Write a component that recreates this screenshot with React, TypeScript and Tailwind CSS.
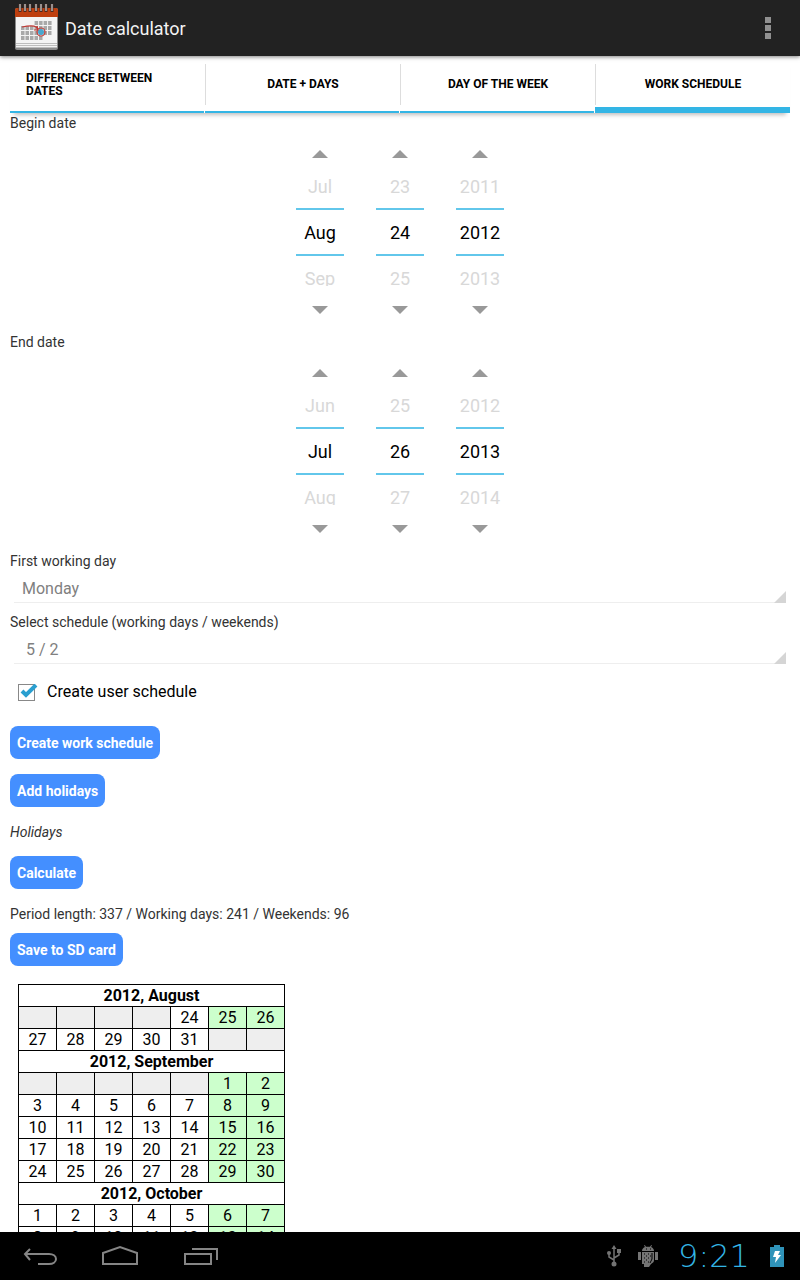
import { useId, useState } from "react";
import type { ReactNode } from "react";
import clsx from "clsx";

const MONTHS = [
  "January",
  "February",
  "March",
  "April",
  "May",
  "June",
  "July",
  "August",
  "September",
  "October",
  "November",
  "December",
];

const WEEKDAYS = [
  "Monday",
  "Tuesday",
  "Wednesday",
  "Thursday",
  "Friday",
  "Saturday",
  "Sunday",
];

const TABS = [
  "Difference between dates",
  "Date + days",
  "Day of the week",
  "Work schedule",
];

const DAY_MS = 24 * 60 * 60 * 1000;

interface DateParts {
  year: number;
  month: number;
  day: number;
}

interface CalendarDay {
  day: number;
  weekend: boolean;
}

interface CalendarMonth {
  title: string;
  weeks: (CalendarDay | null)[][];
}

function toTime({ year, month, day }: DateParts) {
  return Date.UTC(year, month, day);
}

function wrap(value: number, count: number) {
  return (value + count) % count;
}

function buildSchedule(begin: DateParts, end: DateParts) {
  const months: CalendarMonth[] = [];
  let total = 0;
  let weekends = 0;

  for (let time = toTime(begin); time <= toTime(end); time += DAY_MS) {
    const date = new Date(time);
    const column = (date.getUTCDay() + 6) % 7;
    const weekend = column > 4;
    const title = `${date.getUTCFullYear()}, ${MONTHS[date.getUTCMonth()]}`;

    let month = months[months.length - 1];
    if (!month || month.title !== title) {
      month = { title, weeks: [] };
      months.push(month);
    }
    if (month.weeks.length === 0 || column === 0) {
      month.weeks.push(Array(7).fill(null));
    }
    month.weeks[month.weeks.length - 1][column] = {
      day: date.getUTCDate(),
      weekend,
    };

    total += 1;
    if (weekend) weekends += 1;
  }

  return { months, total, weekends };
}

function AppIcon() {
  return (
    <svg width="46" height="48" viewBox="0 0 46 48" aria-hidden="true">
      <rect x="1" y="4" width="43" height="42" rx="2" fill="#8b8b8b" />
      <rect x="2" y="13" width="41" height="31" fill="#f4f4f4" />
      <path d="M1 6a2 2 0 0 1 2-2h39a2 2 0 0 1 2 2v7H1z" fill="#be3f0f" />
      <path d="M2 39.500h41M2 41.500h41M2 43.500h41" stroke="#bdbdbd" />
      {[6, 11, 16, 22, 27, 32, 38].map((x) => (
        <g key={x}>
          <path d={`M${x} 0v8`} stroke="#4b2a20" strokeWidth="3" />
          <path d={`M${x} 0v7`} stroke="#b4b4b4" strokeWidth="1.500" />
        </g>
      ))}
      <path
        d="M20.600 19H38M7 24h31M7 29h31M7 34h22"
        stroke="#a9a9a9"
        strokeWidth="4"
        strokeDasharray="3.500 1"
      />
      <path
        d="M8 23c5-1 11-2 14 0l3 4M20 26h4l-1-4"
        fill="none"
        stroke="#c03a35"
        strokeWidth="1.200"
      />
      <circle cx="27" cy="28" r="3" fill="#49a7cf" />
      <circle
        cx="27"
        cy="28"
        r="4"
        fill="none"
        stroke="#c03a35"
        strokeWidth="1.200"
      />
    </svg>
  );
}

function TabBar() {
  const [active, setActive] = useState(3);

  return (
    <nav
      role="tablist"
      className="mx-[10px] grid h-[57px] shrink-0 grid-cols-4 shadow-[0_6px_4px_-4px_rgba(0,0,0,0.25)]"
    >
      {TABS.map((tab, index) => (
        <button
          key={tab}
          type="button"
          role="tab"
          aria-selected={index === active}
          className="flex flex-col text-left text-[12px] leading-[13px] font-bold text-black uppercase"
          onClick={() => setActive(index)}
        >
          <span
            className={clsx(
              "mt-2 flex h-[41px] w-full items-center justify-center px-4",
              index > 0 && "border-l border-[#dddddd]"
            )}
          >
            {tab}
          </span>
          <span
            className={clsx(
              "mt-auto self-stretch bg-[#33b5e5]",
              index === active ? "h-[6px]" : "mr-px h-[2px]"
            )}
          />
        </button>
      ))}
    </nav>
  );
}

interface SpinnerProps {
  name: string;
  previous: string | number;
  current: string | number;
  next: string | number;
  onStep: (step: number) => void;
}

function Spinner({ name, previous, current, next, onStep }: SpinnerProps) {
  return (
    <div className="flex w-12 flex-col text-center text-lg leading-6">
      <button
        type="button"
        aria-label={`Previous ${name}`}
        className="flex h-[42px] items-center justify-center"
        onClick={() => onStep(-1)}
      >
        <svg width="16" height="8" viewBox="0 0 16 8" fill="#999999">
          <path d="M8 0l8 8H0z" />
        </svg>
      </button>
      <div className="h-[33px] text-[#d8d8d8]">{previous}</div>
      <input
        aria-label={name}
        readOnly
        value={current}
        className="h-12 w-full border-y-2 border-[#62c7eb] text-center text-black outline-none"
      />
      <div className="h-[30px] overflow-hidden pt-[11px] text-[#d8d8d8]">
        {next}
      </div>
      <button
        type="button"
        aria-label={`Next ${name}`}
        className="flex h-[46px] items-center justify-center pt-[2px]"
        onClick={() => onStep(1)}
      >
        <svg width="16" height="8" viewBox="0 0 16 8" fill="#999999">
          <path d="M0 0h16L8 8z" />
        </svg>
      </button>
    </div>
  );
}

interface DatePickerProps {
  label: string;
  value: DateParts;
  onChange: (value: DateParts) => void;
}

function DatePicker({ label, value, onChange }: DatePickerProps) {
  const { year, month, day } = value;
  const monthName = (index: number) => MONTHS[wrap(index, 12)].slice(0, 3);
  const dayNumber = (n: number) => wrap(n - 1, 31) + 1;

  return (
    <fieldset>
      <legend>{label}</legend>
      <div className="flex justify-center gap-8">
        <Spinner
          name="month"
          previous={monthName(month - 1)}
          current={monthName(month)}
          next={monthName(month + 1)}
          onStep={(step) => onChange({ ...value, month: wrap(month + step, 12) })}
        />
        <Spinner
          name="day"
          previous={dayNumber(day - 1)}
          current={day}
          next={dayNumber(day + 1)}
          onStep={(step) => onChange({ ...value, day: dayNumber(day + step) })}
        />
        <Spinner
          name="year"
          previous={year - 1}
          current={year}
          next={year + 1}
          onStep={(step) => onChange({ ...value, year: year + step })}
        />
      </div>
    </fieldset>
  );
}

interface DropdownProps {
  label: string;
  options: string[];
  className?: string;
}

function Dropdown({ label, options, className }: DropdownProps) {
  const id = useId();

  return (
    <div>
      <label htmlFor={id} className="block">
        {label}
      </label>
      <div className="relative mx-1 mb-[9px]">
        <select
          id={id}
          className={clsx(
            "block h-8 w-full appearance-none border-b border-[#eeeeee] pt-1 text-base leading-6 text-[#808080] outline-none",
            className
          )}
        >
          {options.map((option) => (
            <option key={option}>{option}</option>
          ))}
        </select>
        <svg
          width="12"
          height="12"
          viewBox="0 0 12 12"
          fill="#d5d5d5"
          className="pointer-events-none absolute right-0 bottom-0"
        >
          <path d="M12 0v12H0z" />
        </svg>
      </div>
    </div>
  );
}

function ActionButton({ children }: { children: ReactNode }) {
  return (
    <button
      type="button"
      className="h-[33px] rounded-lg bg-[#448fff] px-[7px] font-bold text-white"
    >
      {children}
    </button>
  );
}

function Calendar({ months }: { months: CalendarMonth[] }) {
  return (
    <table className="mt-[18px] ml-2 w-[267px] table-fixed border-collapse text-center text-base leading-5 text-black">
      {months.map((month) => (
        <tbody key={month.title}>
          <tr className="h-[22px]">
            <th colSpan={7} className="border border-black p-0 font-bold">
              {month.title}
            </th>
          </tr>
          {month.weeks.map((week, row) => (
            <tr key={row} className="h-[22px]">
              {week.map((cell, column) => (
                <td
                  key={column}
                  className={clsx(
                    "border border-black p-0",
                    !cell && "bg-[#eeeeee]",
                    cell?.weekend && "bg-[#ccffcc]"
                  )}
                >
                  {cell?.day}
                </td>
              ))}
            </tr>
          ))}
        </tbody>
      ))}
    </table>
  );
}

function SystemBar() {
  return (
    <footer className="flex h-12 shrink-0 items-center bg-black pr-4 pl-5">
      <div className="flex gap-10">
        <button type="button" aria-label="Back">
          <svg width="40" height="24" viewBox="0 0 40 24" fill="none" stroke="#858585" strokeWidth="2">
            <path d="M10 5l-5 5 5 6M5 10h24c4 0 7 2 7 5s-3 5-7 5H18" />
          </svg>
        </button>
        <button type="button" aria-label="Home">
          <svg width="40" height="24" viewBox="0 0 40 24" fill="none" stroke="#858585" strokeWidth="2">
            <path d="M3 20V9l17-6 17 6v11z" />
          </svg>
        </button>
        <button type="button" aria-label="Recent apps">
          <svg width="40" height="24" viewBox="0 0 40 24" fill="none" stroke="#858585" strokeWidth="2">
            <path d="M5 10h26v10H5zM12 5h25v11" />
          </svg>
        </button>
      </div>
      <div className="ml-auto flex items-center gap-4">
        <svg width="16" height="22" viewBox="0 0 16 22" fill="none" stroke="#747474" strokeWidth="1.500">
          <path d="M8 3v15M8 15l-5-3V8M8 13l5-3V6" />
          <path d="M5.500 4L8 0l2.500 4z" fill="#747474" stroke="none" />
          <rect x="11" y="4" width="4" height="4" fill="#747474" stroke="none" />
          <circle cx="3" cy="8" r="2" fill="#747474" stroke="none" />
          <circle cx="8" cy="19" r="2.500" fill="#747474" stroke="none" />
        </svg>
        <svg width="20" height="22" viewBox="0 0 20 22" fill="#747474">
          <path d="M4 6c0-2 1.500-3.500 3-4L6 .5l.8-.5L8 1.700h4L13.200 0l.8.5L13 2c1.500.5 3 2 3 4z" />
          <path d="M0 7h3v8H0zM17 7h3v8h-3zM4 7h12v8c0 3-2 3-3 4l-2 3H6v-3H4z" />
          <path
            d="M8 4h1M12 4h1M6 9h1M10 9h1M8 11h1M12 11h1M6 13h1M10 13h1M8 15h1M6 17h1M10 17h1M14 8v6l-2 4"
            fill="none"
            stroke="#000000"
          />
        </svg>
        <time className="w-20 text-center font-['DejaVu_Sans',sans-serif] text-[32px] leading-8 font-extralight text-[#33b5e5]">
          9:21
        </time>
        <svg width="14" height="22" viewBox="0 0 14 22">
          <path d="M4 0h6v2h4v20H0V2h4z" fill="#2f93b9" />
          <path d="M5 6h5L8 10h3l-6 8 1-6H3z" fill="#ffffff" />
        </svg>
      </div>
    </footer>
  );
}

export default function App() {
  const [begin, setBegin] = useState<DateParts>({ year: 2012, month: 7, day: 24 });
  const [end, setEnd] = useState<DateParts>({ year: 2013, month: 6, day: 26 });
  const [custom, setCustom] = useState(true);
  const { months, total, weekends } = buildSchedule(begin, end);

  return (
    <div className="flex h-screen flex-col bg-white font-[Roboto,sans-serif] text-sm text-[#333333]">
      <header className="relative flex h-14 shrink-0 items-center bg-[#222222] pr-7 pl-[14px] shadow-[0_1px_4px_rgba(0,0,0,0.5)]">
        <AppIcon />
        <h1 className="ml-[5px] pt-[2px] text-lg text-[#f3f3f3]">
          Date calculator
        </h1>
        <button
          type="button"
          aria-label="More options"
          className="ml-auto flex flex-col gap-[2px] px-[1px]"
        >
          <span className="size-[6px] bg-[#909090]" />
          <span className="size-[6px] bg-[#909090]" />
          <span className="size-[6px] bg-[#909090]" />
        </button>
      </header>

      <TabBar />

      <main className="min-h-0 flex-1 overflow-y-auto px-[10px] [scrollbar-width:none]">
        <DatePicker label="Begin date" value={begin} onChange={setBegin} />
        <DatePicker label="End date" value={end} onChange={setEnd} />
        <Dropdown label="First working day" options={WEEKDAYS} className="pl-2" />
        <Dropdown
          label="Select schedule (working days / weekends)"
          options={["5 / 2", "2 / 2", "3 / 3"]}
          className="pl-3"
        />

        <label className="mt-3 ml-2 flex h-8 w-fit items-center text-base text-black">
          <span className="relative mr-3 size-[17px]">
            <input
              type="checkbox"
              checked={custom}
              onChange={(event) => setCustom(event.target.checked)}
              className="block size-full appearance-none border border-[#888888] bg-white"
            />
            {custom && (
              <svg
                width="20"
                height="17"
                viewBox="0 0 20 17"
                className="pointer-events-none absolute top-0 left-0"
              >
                <path
                  d="M4 7l4 4 10-10"
                  fill="none"
                  stroke="#2a9fd0"
                  strokeWidth="4"
                />
              </svg>
            )}
          </span>
          Create user schedule
        </label>

        <div className="mt-[18px] flex flex-col items-start">
          <ActionButton>Create work schedule</ActionButton>
          <div className="h-[15px]" />
          <ActionButton>Add holidays</ActionButton>
          <p className="my-[15px] h-[19px] italic">Holidays</p>
          <ActionButton>Calculate</ActionButton>
          <p className="mt-[15px] mb-[9px]">
            Period length: {total} / Working days: {total - weekends} / Weekends:{" "}
            {weekends}
          </p>
          <ActionButton>Save to SD card</ActionButton>
        </div>

        <Calendar months={months} />
      </main>

      <SystemBar />
    </div>
  );
}
